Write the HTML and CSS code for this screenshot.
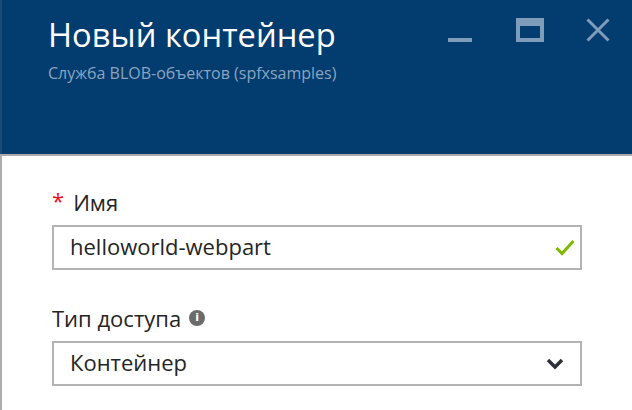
FILE: index.html
```html
<!DOCTYPE html>
<html lang="ru">
<head>
<meta charset="utf-8">
<link rel="stylesheet" href="styles.css">
</head>
<body>
<div class="blade">
  <header class="header">
    <div class="titles">
      <h1 class="title">Новый контейнер</h1>
      <div class="subtitle">Служба BLOB-объектов (spfxsamples)</div>
    </div>
    <div class="controls">
      <svg class="ctl ctl-min" width="24" height="24" viewBox="0 0 24 24"><rect x="0" y="20" width="24" height="4" fill="#7f9cbb"/></svg>
      <svg class="ctl ctl-max" width="28" height="24" viewBox="0 0 28 24"><path d="M0 0H28V24H0Z M4 8V20H24V8Z" fill="#7f9cbb" fill-rule="evenodd"/></svg>
      <svg class="ctl ctl-close" width="24" height="24" viewBox="0 0 24 24"><path d="M1.5 1.5L22.5 22.5M22.5 1.5L1.5 22.5" stroke="#7f9cbb" stroke-width="3"/></svg>
    </div>
  </header>
  <main class="content">
    <div class="field">
      <label class="label"><span class="req">*</span>Имя</label>
      <div class="input">
        <span class="value">helloworld-webpart</span>
        <svg class="check" width="20" height="17" viewBox="0 0 20 17"><path d="M1.5 9L7 14.5L18.5 2" fill="none" stroke="#7fba00" stroke-width="3"/></svg>
      </div>
    </div>
    <div class="field field-2">
      <label class="label">Тип доступа<span class="info">i</span></label>
      <div class="input">
        <span class="value">Контейнер</span>
        <svg class="chev" width="18" height="12" viewBox="0 0 18 12"><path d="M2 2L9 9L16 2" fill="none" stroke="#2b2f36" stroke-width="3.4"/></svg>
      </div>
    </div>
  </main>
</div>
</body>
</html>
```

FILE: styles.css
```css
html, body {
  margin: 0;
  padding: 0;
  background: #ffffff;
}
body {
  width: 632px;
  height: 410px;
  overflow: hidden;
  font-family: "Open Sans", "Noto Sans", sans-serif;
}
.blade {
  display: flex;
  flex-direction: column;
  height: 410px;
}
.header {
  height: 154px;
  flex: none;
  box-sizing: border-box;
  background: #033c6e;
  border-left: 2px solid #1a4a78;
  padding: 0 22px 0 46px;
  display: flex;
  justify-content: space-between;
  align-items: flex-start;
}
.titles {
  padding-top: 15px;
}
.title {
  margin: 0;
  font-weight: 400;
  font-size: 32.7px;
  line-height: 40px;
  color: #ffffff;
}
.subtitle {
  margin-top: 8px;
  font-size: 16px;
  line-height: 20px;
  color: #8aa4c1;
}
.controls {
  display: flex;
  align-items: flex-start;
  padding-top: 18px;
}
.ctl { display: block; }
.ctl-max { margin-left: 44px; }
.ctl-close { margin-left: 42px; }
.content {
  flex: 1;
  border-top: 2px solid #acacac;
  border-left: 2px solid #acacac;
  padding: 32px 50px 0 50px;
  color: #252525;
}
.field {
  display: flex;
  flex-direction: column;
}
.field-2 { margin-top: 34px; }
.label {
  display: flex;
  align-items: center;
  font-size: 22px;
  line-height: 28px;
  height: 28px;
  color: #252525;
}
.req {
  color: #e81123;
  font-size: 22px;
  line-height: 28px;
  margin-right: 9px;
  position: relative;
  top: -2px;
}
.info {
  display: inline-flex;
  align-items: center;
  justify-content: center;
  width: 16px;
  height: 16px;
  border-radius: 50%;
  background: #6b6b6b;
  color: #fff;
  font-size: 11px;
  font-weight: 700;
  line-height: 16px;
  margin-left: 8px;
  font-family: "DejaVu Sans", sans-serif;
}
.input {
  margin-top: 9px;
  box-sizing: border-box;
  width: 530px;
  height: 45px;
  border: 2px solid #b3b3b3;
  display: flex;
  align-items: center;
  justify-content: space-between;
  padding: 0 5px 3px 16px;
}
.value {
  font-size: 22px;
  line-height: 30px;
  color: #252525;
}
.check { display: block; margin-top: 2px; }
.chev { display: block; margin-right: 11px; margin-top: 3px; }
```
